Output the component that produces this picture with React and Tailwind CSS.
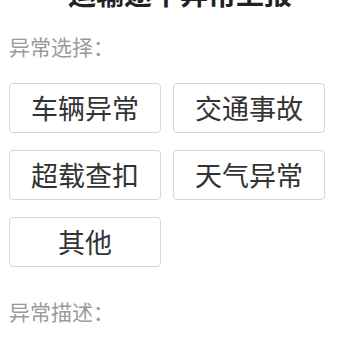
const options = ["车辆异常", "交通事故", "超载查扣", "天气异常", "其他"];

const App = () => {
  return (
    <div
      className="w-[360px] h-[360px] overflow-hidden bg-white px-[9px]"
      style={{ fontFamily: '"Noto Sans CJK SC", "Noto Sans", sans-serif' }}
    >
      <h1 className="-mt-[23px] h-[32px] leading-[32px] text-center text-[28px] font-bold text-[#222]">
        运输途中异常上报
      </h1>

      <p className="mt-[23px] h-[28px] leading-[28px] text-[21px] text-[#9a9a9a]">
        异常选择：
      </p>

      <div className="mt-[23px] grid grid-cols-[152px_152px] gap-x-[12px] gap-y-[17px]">
        {options.map((item) => (
          <button
            key={item}
            type="button"
            className="h-[50px] flex items-center justify-center rounded-[4px] border border-[#d6d6d6] bg-white text-[27px] text-[#333]"
          >
            {item}
          </button>
        ))}
      </div>

      <p className="mt-[30px] h-[28px] leading-[28px] text-[21px] text-[#9a9a9a]">
        异常描述：
      </p>
    </div>
  );
};

export default App;
